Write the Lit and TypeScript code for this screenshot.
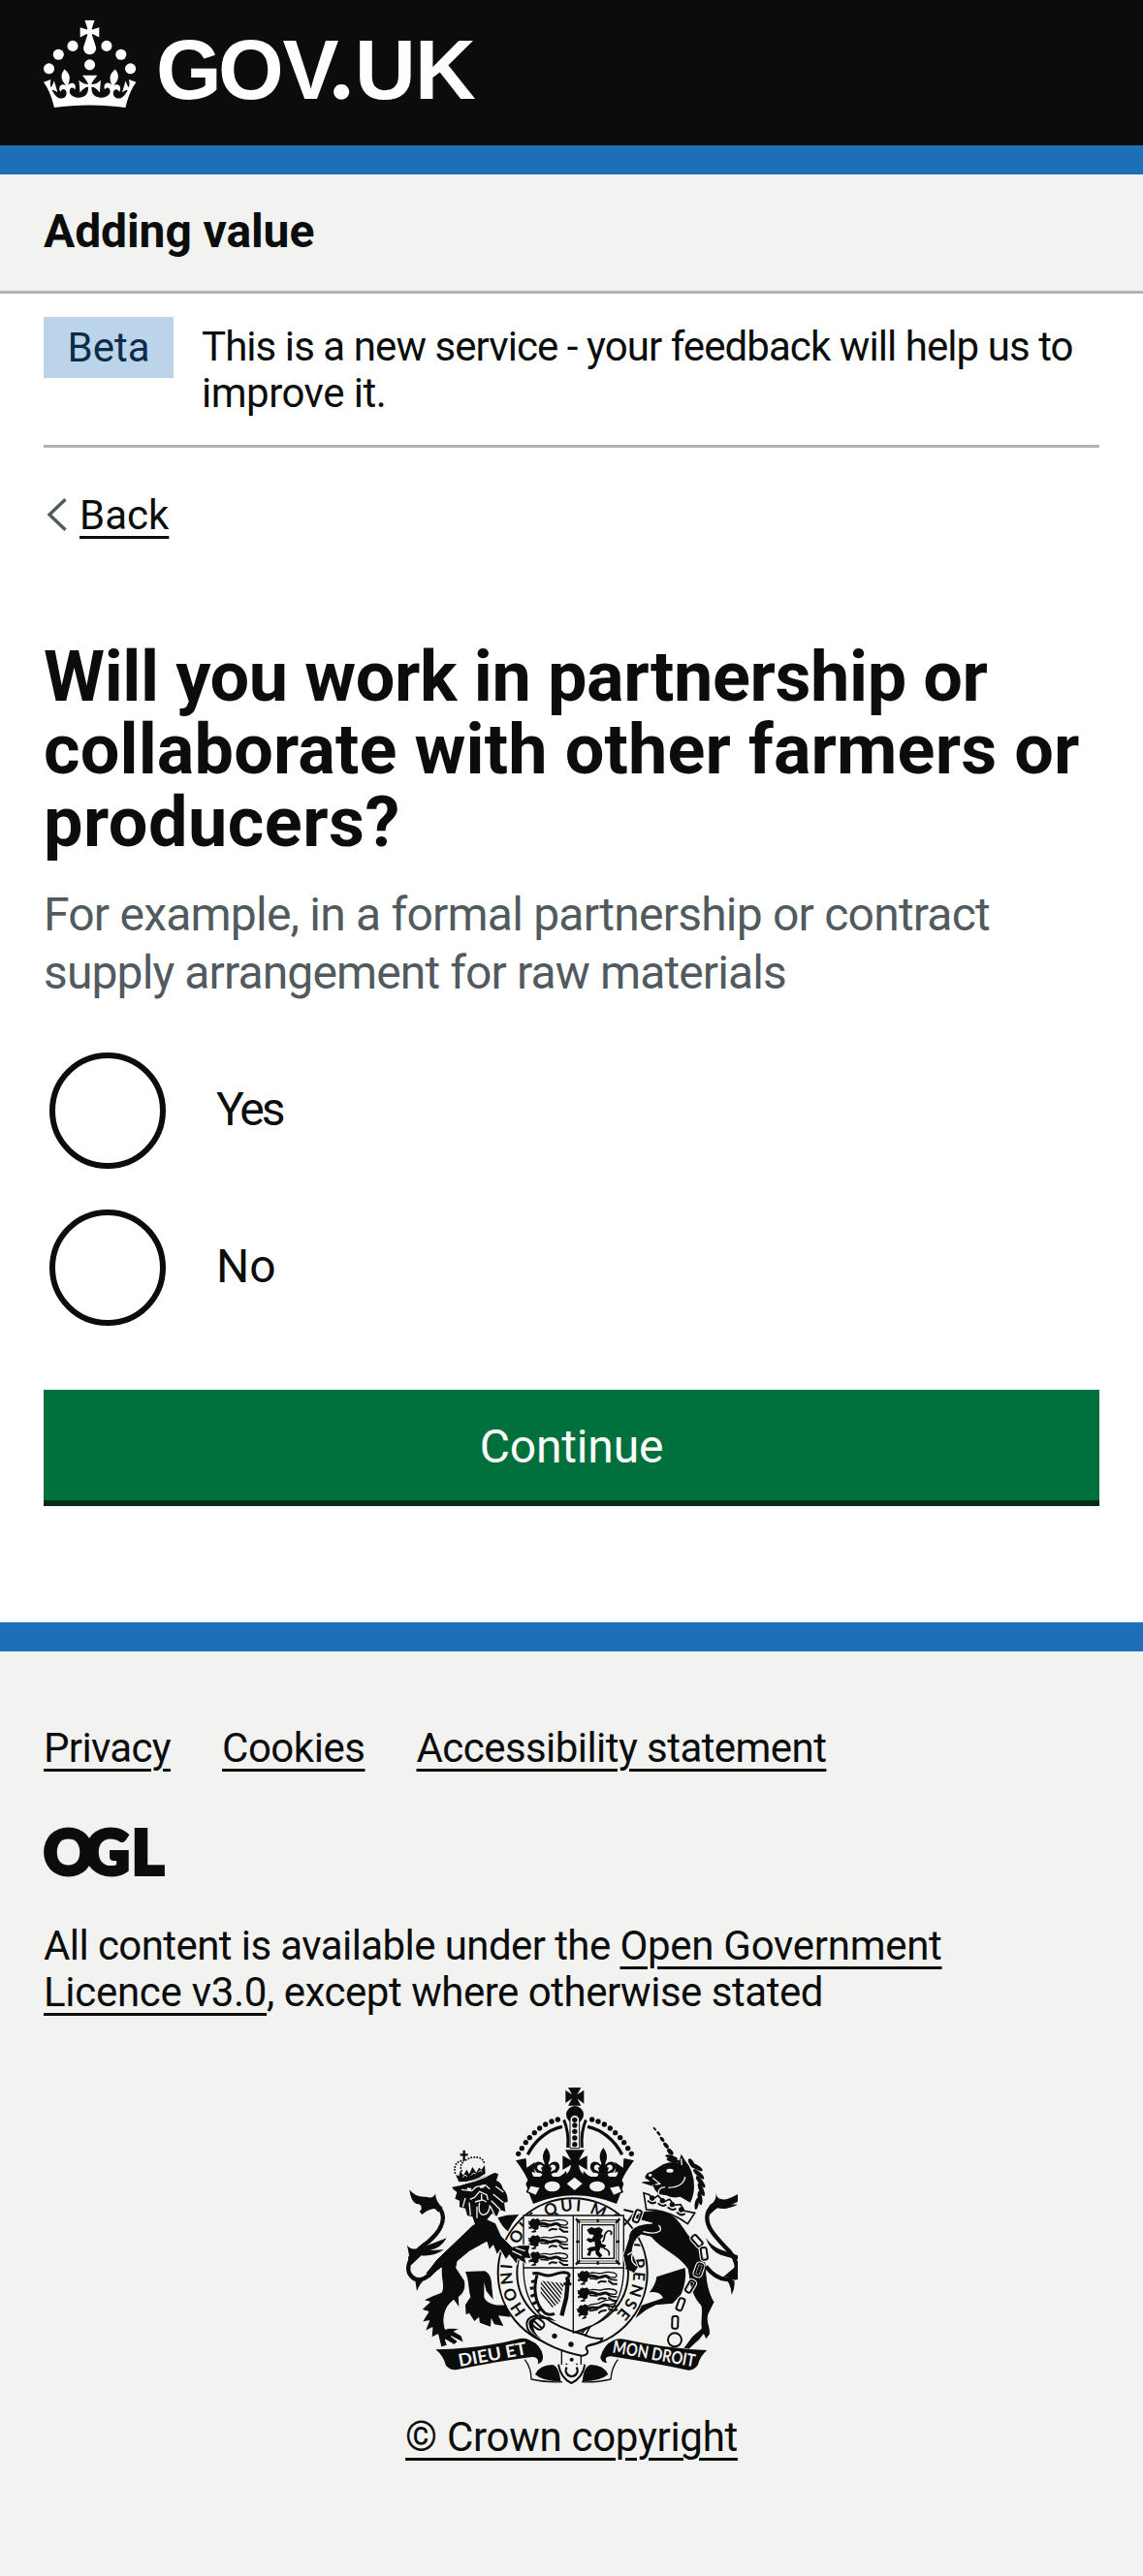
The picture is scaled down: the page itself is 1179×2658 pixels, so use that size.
import { LitElement, html, svg, css } from "lit";
import { customElement } from "lit/decorators.js";

const INK = "#0b0c0c";
const PAPER = "#f2f2f0";

/* One of the small walking lions in the quartered shield, 125 x 46 units. */
const passant = (x: number, y: number) => svg`
  <g transform="translate(${x} ${y})">
    <path d="M10 5l6-4 6 3 8-3 8 7 1 12-6 5-1 9-9 4-8-5-7-1-2-9-5-5z"/>
    <path d="M0 8l9 4-5 6zM2 26l10 4-9 5zM22 36l4 7-10 2-8-2z"/>
    <g fill="none" stroke="${INK}" stroke-linecap="round">
      <path d="M40 9c12-6 20 2 32 0s20-6 32-3c16 1 22 8 16 14s-14-2-24 2" stroke-width="4"/>
      <path d="M38 18c12-7 22 8 36 3s16-4 24 1" stroke-width="9"/>
      <path d="M40 25l22 2M94 22c8 8 16 8 28 8" stroke-width="5"/>
      <path d="M66 38c8-8 14-2 22-3M98 33l12 9h12" stroke-width="6"/>
    </g>
  </g>`;

const leaf = (x: number, y: number, rx: number, ry: number, a: number) =>
  svg`<ellipse cx="${x}" cy="${y}" rx="${rx}" ry="${ry}" transform="rotate(${a} ${x} ${y})"/>`;

const link = (x: number, y: number, a: number) => svg`
  <g transform="translate(${x} ${y}) rotate(${a})" fill="none">
    <rect x="-10" y="-20" width="20" height="40" rx="7" stroke="${PAPER}" stroke-width="11"/>
    <rect x="-9" y="-19" width="18" height="38" rx="6" stroke="${INK}" stroke-width="6"/>
  </g>`;

/* Half of the crown: pearls, arch, outer spike and fleur-de-lis. */
const halfCrown = svg`
  ${[[526, 141], [507, 147], [488, 156], [470, 168], [454, 182], [439, 197], [427, 212], [415, 230], [404, 247]].map(
    ([x, y]) => svg`<circle cx="${x}" cy="${y}" r="8"/>`)}
  <path d="M540 163C496 172 455 205 433 250" fill="none" stroke="${INK}" stroke-width="10"/>
  <path d="M545 142Q561 180 557 228" fill="none" stroke="${INK}" stroke-width="9"/>
  <path d="M396 268L427 261C430 268 428 280 430 290L456 272Q448 292 457 306L446 302Q446 320 462 320Q476 320 478 310Q470 304 462 306Q446 290 456 276Q470 266 484 280Q485 284 485 276Q472 252 491 228Q510 252 497 276Q497 284 500 280Q514 266 528 276Q538 290 522 306Q512 304 506 310Q508 320 520 320Q538 318 552 300L560 345H440Q428 310 396 268z"/>
  <path d="M468 298a9 9 0 1 1 12-10q-3 2-6 1l4 14zM514 298a9 9 0 1 0-12-10q3 2 6 1l-4 14z" fill="${PAPER}"/>`;

@customElement("royal-arms")
export class RoyalArms extends LitElement {
  static styles = css`
    :host { display: block; }
    .arms { display: block; width: 343px; height: 307px; }
    .motto { font-family: Lato, sans-serif; font-weight: 700; }
    .garter { font-family: Lato, sans-serif; font-weight: 700; }
  `;

  render() {
    return html`
      <svg class="arms" viewBox="54 42 1029 921" fill="${INK}" aria-hidden="true">
        <defs>
          <path id="ring" d="M429 734A188 188 0 1 1 683 764"/>
          <clipPath id="harp"><path d="M474 640l72 8-14 60-24 16-36-40z"/></clipPath>
        </defs>

        <!-- garter -->
        <circle cx="572" cy="616" r="231" fill="${PAPER}" stroke="${INK}" stroke-width="6"/>
        <circle cx="572" cy="616" r="172" fill="none" stroke="${INK}" stroke-width="6"/>
        <text class="garter" font-size="50"><textPath href="#ring" textLength="868">HONI SOIT QUI MAL Y PENSE</textPath></text>

        <!-- shield -->
        <path d="M420 438H730V600C730 700 690 765 575 806C460 765 420 700 420 600z" fill="${PAPER}" stroke="${INK}" stroke-width="4"/>
        <path d="M574 438V806M420 600H730" fill="none" stroke="${INK}" stroke-width="4"/>
        ${passant(434, 446)}${passant(434, 498)}${passant(434, 549)}
        ${passant(586, 608)}${passant(586, 660)}
        <g transform="rotate(-14 586 740)">${passant(586, 718)}</g>
        <g fill="none" stroke="${INK}">
          <rect x="586" y="452" width="128" height="134" stroke-width="3"/>
          <rect x="593" y="459" width="114" height="120" stroke-width="2"/>
          <rect x="601" y="467" width="99" height="104" stroke-width="4"/>
          <path d="M650 449v10M650 580v10M583 519h10M707 519h10M582 448l12 12M718 448l-12 12M582 590l12-12M718 590l-12-12" stroke-width="7"/>
        </g>
        <path d="M616 482l14-8 10 4 14-4 12 8-6 14 8 4-10 12 4 14 14 4-6 10-12-2-4 12 10 12-8 8-12-12-2-12-12 4-4 14-10-4 6-12-6-6 10-6 16-2-2-16-14 4-12-8 6-6 12 2 6-12-14-2z"/>
        <path d="M664 520c10-6 2-20 12-30s20-2 14 8M668 540c16 4 20 12 16 22" fill="none" stroke="${INK}" stroke-width="5"/>
        <g fill="none" stroke="${INK}">
          <path d="M448 618c20-8 30 8 52 6s34-16 56-8c10 6 4 18-6 16" stroke-width="9"/>
          <path d="M462 622c-12 40-8 90 24 118 10 6 20 6 30 2" stroke-width="9"/>
          <path d="M456 640l-12 4M452 662l-12 2M454 684l-12 4M460 706l-12 6M472 728l-10 8" stroke-width="9"/>
          <path d="M558 634l-6 60-14 54" stroke-width="13"/>
          <path d="M544 650h24" stroke-width="9"/>
          <g clip-path="url(#harp)" stroke-width="4">
            ${[0, 1, 2, 3, 4, 5, 6, 7, 8, 9, 10, 11].map((i) => svg`<path d="M${412 + i * 12} 630l90 110"/>`)}
          </g>
        </g>

        <!-- crown -->
        <path d="M558 42h40l-12 22 21-14v42l-21-16 12 22h-40l12-22-20 14V50l20 14z"/>
        <circle cx="579" cy="126" r="27"/>
        <path d="M564 230V142a14 14 0 0 1 29 0V230z" fill="${PAPER}" stroke="${INK}" stroke-width="3"/>
        ${[142, 159, 178, 198, 218].map((y) => svg`<circle cx="578.5" cy="${y}" r="8"/>`)}
        <path d="M450 402Q578 350 708 402Q718 378 730 340L718 318H440L427 340Q440 378 450 402z"/>
        ${halfCrown}
        <g transform="matrix(-1 0 0 1 1158 0)">${halfCrown}</g>
        <path d="M549 235h60l-18 32 26-14v44l-26-16c2 18 12 30 26 38h-76c14-8 24-20 26-38l-26 16v-44l26 14z"/>
        <path d="M578 320l24 20-24 20-24-20z" fill="${PAPER}"/>
        <ellipse cx="509" cy="348" rx="24" ry="16" fill="${PAPER}"/>
        <ellipse cx="648" cy="348" rx="24" ry="16" fill="${PAPER}"/>
        <path d="M441 344l32 7-14 26-28-12z" fill="${PAPER}" stroke="${INK}" stroke-width="5"/>
        <path d="M716 344l-32 7 14 26 28-12z" fill="${PAPER}" stroke="${INK}" stroke-width="5"/>

        <!-- lion -->
        <path d="M340 445l28-8 38-2q-20 22-34 52-16-10-32-42z"/>
        <path d="M262 468L150 575Q135 595 118 616L130 632Q150 610 166 600C163 635 176 655 166 676L140 686L110 700L130 706L105 730L126 736L106 768L128 764L115 796L138 785L135 816L155 806L165 846L184 840L178 822L205 838L217 828L196 812L235 832L228 810L205 797L222 790Q195 783 178 790C168 760 175 720 204 700L222 725L220 690C236 680 243 660 238 640L212 600L216 580L252 550L306 520L314 545L326 530L338 560L348 545L366 575L376 560L400 590L402 572L430 590L425 570L445 572L436 550L441 530L408 530L385 535L352 502L334 462L300 446z"
          stroke="${PAPER}" stroke-width="3"/>
        <path d="M240 612L300 610C318 618 322 640 322 660L326 698L305 672L298 645L298 690C305 712 335 718 366 715L380 752L342 748L358 780L330 775L320 755L318 782L285 770L282 752L268 765L252 740L242 745L240 715L256 690C248 660 252 640 240 612z"/>
        <path d="M385 548l30 14M395 538l30 10M232 572q-16 6-14 22l12 20" fill="none" stroke="${PAPER}" stroke-width="4"/>
        <path d="M140 606C115 645 82 645 66 616C54 582 88 545 125 520C160 490 180 455 166 425C152 400 124 412 102 430" fill="none" stroke="${INK}" stroke-width="13"/>
        <path d="M67 358Q84 382 118 380Q142 388 147 370Q148 396 170 414L156 428Q132 394 100 430Q112 402 88 402Q70 392 67 358zM60 530Q72 546 98 540L182 508Q164 540 130 546L174 544Q140 566 104 562L72 592Q58 572 66 562zM84 634L90 672Q98 650 116 634z"/>
        <path d="M202 356L199 350L226 345L330 305L342 310L336 330Q352 335 356 355Q372 370 371 396L360 398L364 426L346 420L338 440L322 432L308 450L290 476L270 465L262 442L246 438L240 416L222 412L222 392L208 386L214 366z"/>
        <g fill="none" stroke="${PAPER}" stroke-width="4">
          <path d="M200 345Q275 338 332 302"/>
          <path d="M228 358l32 4 12-12 30-6 14 12M254 388l14-6 16-18 22 10 4 16M270 396l22-6 14 6M290 372v18"/>
          <path d="M284 398q-6 38 12 38 18-2 20-30M252 398l4 40M240 384l-8 28M334 348l24 18M326 372l32 26M320 392l28 28M318 410l12 26M276 410v36"/>
        </g>
        <path d="M246 352l14 2-4 8-12-4zM284 346l16-4-2 10-12 2z" fill="${PAPER}"/>
        <path d="M236 236v32M224 250h24" stroke="${INK}" stroke-width="7" fill="none"/>
        <path d="M208 306C202 276 222 268 236 268M242 266C264 252 296 256 298 276M228 300C222 284 230 272 238 270" fill="none" stroke="${INK}" stroke-width="6" stroke-linecap="round" stroke-dasharray="0 9"/>
        <path d="M210 312l10 4 4-16 10 14 10-18 8 14 10-22 12 18 8-16 8 6 10-14 2 26Q268 334 220 334z"/>
        <path d="M232 320l8-8 6 6M258 314l8-8 6 4M280 304l6-6 6 4" fill="none" stroke="${PAPER}" stroke-width="3"/>

        <!-- unicorn -->
        ${leaf(826, 170, 7, 3, 50)}${leaf(838, 184, 8, 4, 50)}${leaf(849, 202, 9, 5, 50)}${leaf(861, 221, 11, 6, 50)}${leaf(874, 241, 12, 7, 48)}
        ${leaf(878, 258, 20, 6, 18)}${leaf(884, 268, 22, 6, 12)}
        <path d="M796 322Q798 304 816 302L852 280Q880 268 900 276L908 248L920 268Q948 300 948 350Q947 378 936 398L905 380Q880 386 862 376L838 372L826 358L822 348L784 336L812 332z"/>
        <path d="M838 372Q834 352 858 350M820 322l22 18-24 4" fill="none" stroke="${PAPER}" stroke-width="4"/>
        <path d="M786 334L828 346L826 332z"/>
        <ellipse cx="873" cy="299" rx="11" ry="6" fill="${PAPER}"/>
        <circle cx="812" cy="313" r="5" fill="${PAPER}"/>
        <path d="M920 318Q916 350 868 352M908 262l2 20" fill="none" stroke="${PAPER}" stroke-width="4"/>
        ${leaf(940, 276, 16, 7, 60)}${leaf(955, 288, 22, 7, 30)}${leaf(962, 310, 22, 7, 42)}${leaf(968, 334, 22, 7, 52)}${leaf(970, 358, 22, 7, 66)}${leaf(966, 384, 22, 7, 82)}${leaf(956, 402, 18, 6, 100)}
        <path d="M745 510C746 476 775 464 818 462L766 448Q764 430 800 424Q860 414 892 446C915 470 925 495 945 515C965 545 986 570 986 605C986 650 1000 690 1011 706L992 745C986 770 999 780 997 805L985 822L977 806L965 822L932 852L914 850L942 812L970 788C966 760 975 735 968 716C950 698 938 670 934 644L928 604C900 560 850 548 815 505L784 498Q760 512 756 550L775 598L762 618L736 598L728 562z"
          stroke="${PAPER}" stroke-width="3"/>
        <path d="M832 628L920 600Q926 640 908 682L882 710L830 715L800 730L766 756L786 716L852 694Q842 670 810 676Q830 650 832 628z"/>
        <path d="M730 420l34 8-22 30M736 600l18 8M780 484q40-4 62-2l-2 14" fill="none" stroke="${INK}" stroke-width="6"/>
        <path d="M790 488q36 10 52-2 6-8-4-18" fill="none" stroke="${PAPER}" stroke-width="4"/>
        <path d="M762 548q-18 30 8 46M742 560l14-8" fill="none" stroke="${PAPER}" stroke-width="4"/>
        <path d="M792 368l18 6 8 16 18-14 18 20 18-8 14 18 20-2 12 20 32 6-22 34Q866 418 800 420z" fill="${PAPER}" stroke="${INK}" stroke-width="5"/>
        ${[[818, 384], [850, 392], [880, 404], [908, 420]].map(([x, y]) => svg`<circle cx="${x}" cy="${y}" r="8"/><path d="M${x - 14} ${y + 8}q14 14 26 4" fill="none" stroke="${INK}" stroke-width="6"/>`)}
        ${link(772, 440, 20)}
        ${link(957, 516, -42)}${link(979, 556, -8)}${link(963, 606, 20)}${link(936, 658, 30)}${link(906, 713, 20)}${link(889, 769, 2)}
        <circle cx="888" cy="823" r="21" fill="none" stroke="${INK}" stroke-width="6"/>
        <path d="M984 596Q1030 652 1072 628Q1092 590 1058 550C1020 510 974 470 992 425C1004 402 1040 412 1083 388" fill="none" stroke="${INK}" stroke-width="13"/>
        <path d="M1016 370Q1018 392 1048 388Q1070 380 1083 372V392Q1056 396 1050 402L1083 404Q1040 424 1020 414L990 440Q985 412 1004 400Q1016 392 1016 370zM984 506Q996 528 1030 544L1083 562V574Q1050 566 1030 560Q996 546 984 506zM1083 590V636Q1066 642 1036 630zM1036 630Q1062 640 1064 684Q1080 650 1068 626z"/>

        <!-- belt, plinth and motto ribbons -->
        <path d="M424 884Q444 910 444 945Q490 956 540 953M712 884Q692 910 690 945Q640 956 600 953" fill="none" stroke="${INK}" stroke-width="4"/>
        <path d="M456 930Q470 900 510 900Q530 905 535 952Q480 952 456 930zM682 930Q668 900 628 900Q606 905 602 952Q656 952 682 930z"/>
        <path d="M538 850V900M598 850V900" fill="none" stroke="${INK}" stroke-width="4"/>
        <path d="M528 900Q548 915 554 896M610 900Q590 915 584 896" fill="none" stroke="${INK}" stroke-width="5"/>
        <path d="M528 900Q536 942 568 957Q602 942 610 900" fill="${PAPER}" stroke="${INK}" stroke-width="6"/>
        <path d="M554 908a18 18 0 1 0 30 0" fill="none" stroke="${INK}" stroke-width="7"/>
        <circle cx="569" cy="884" r="6"/>
        <path d="M430 770Q436 744 480 750C520 780 562 796 604 806Q640 822 664 818Q662 832 636 836Q604 842 618 856Q622 870 600 872C540 860 480 834 440 800Q430 790 430 770z" fill="${PAPER}" stroke="${INK}" stroke-width="6"/>
        <path d="M436 770Q440 748 500 752l22 14Q470 750 450 768Q446 800 476 820Q436 800 436 770z"/>
        <rect x="448" y="760" width="36" height="28" rx="12" transform="rotate(38 466 774)" fill="${PAPER}" stroke="${INK}" stroke-width="6"/>
        <path d="M452 764l26 24" stroke="${INK}" stroke-width="6"/>
        <circle cx="516" cy="811" r="8"/><circle cx="567" cy="837" r="8"/>
        <path d="M572 802L626 782L610 812M598 806l18-22" fill="none" stroke="${INK}" stroke-width="5"/>
        <path d="M148 853Q290 850 400 821Q425 815 440 824Q474 838 480 872Q482 892 464 898Q470 876 446 876Q320 892 215 915Q195 919 180 903Q172 872 148 853z"/>
        <path d="M988 855Q860 850 736 822Q712 816 698 824Q668 838 658 876Q658 892 678 895Q666 874 690 874Q820 894 930 917Q948 918 960 900Q966 874 988 855z"/>
        <g class="motto" fill="${PAPER}" font-size="54">
          <text transform="translate(222 906) rotate(-10.5)" textLength="214" lengthAdjust="spacingAndGlyphs">DIEU ET</text>
          <text transform="translate(694 862) rotate(10)" textLength="258" lengthAdjust="spacingAndGlyphs">MON DROIT</text>
        </g>
      </svg>`;
  }
}

@customElement("app-root")
export class AppRoot extends LitElement {
  static styles = css`
    :host {
      display: flex; flex-direction: column; min-height: 2658px;
      background: #fff; color: #0b0c0c;
      font: 400 42px/48px Roboto, "Liberation Sans", sans-serif;
    }
    a { color: inherit; text-decoration: underline; text-decoration-thickness: 3px; text-underline-offset: 7px; }
    .masthead { box-sizing: border-box; height: 180px; padding: 21px 45px 0; background: #0b0c0c; border-bottom: 30px solid #1d70b8; }
    .logo { display: block; width: 486px; height: 90px; fill: #fff; overflow: visible; }
    .wordmark { font: 700 87px "Liberation Sans", sans-serif; }
    .stop { font: 900 98px Lato, sans-serif; }
    .service { box-sizing: border-box; height: 123px; padding: 29px 45px 0; background: #f2f2f0; border-bottom: 3px solid #b1b4b6; font-size: 48px; line-height: 60px; font-weight: 700; letter-spacing: -0.1px; }
    main { padding: 0 45px; }
    .phase { box-sizing: border-box; height: 159px; padding-top: 24px; border-bottom: 3px solid #b1b4b6; display: flex; align-items: flex-start; gap: 29px; }
    .tag { width: 134px; height: 63px; line-height: 63px; text-align: center; background: #bbd4ea; color: #0c2d4a; }
    .phase-text { margin: 7px 0 0; white-space: nowrap; }
    .back { display: flex; align-items: center; margin-top: 46px; }
    .chevron { width: 21px; height: 34px; margin: 0 13px 2px 3px; fill: none; stroke: #505a5f; stroke-width: 3.4; }
    h1 { margin: 105px 0 0; font-size: 72px; line-height: 75px; font-weight: 700; white-space: nowrap; }
    .hint { margin: 28px 0 0; font-size: 48px; line-height: 60px; color: #505a5f; white-space: nowrap; }
    .radios { display: grid; gap: 42px; margin-top: 52px; padding-left: 6px; }
    .radio { display: flex; align-items: center; gap: 52px; font-size: 48px; line-height: 60px; }
    .dot { box-sizing: border-box; width: 120px; height: 120px; border: 6px solid #0b0c0c; border-radius: 50%; }
    .label { padding-bottom: 2px; }
    .go { display: block; box-sizing: border-box; width: 100%; height: 120px; margin-top: 66px; padding: 3px 0 0; border: 0; border-bottom: 6px solid #002d18; background: #00703c; color: #fff; font: 400 48px/60px Roboto, sans-serif; letter-spacing: -0.2px; }
    footer { flex: 1; margin-top: 120px; padding: 76px 45px 0; background: #f2f2f0; border-top: 30px solid #1d70b8; }
    .links { display: flex; gap: 53px; }
    .ogl { display: block; width: 124px; height: 50px; margin-top: 59px; overflow: visible; fill: #0b0c0c; }
    .ogl-text { font: 900 63px Lato, sans-serif; stroke: #0b0c0c; stroke-width: 4px; }
    .licence { margin: 47px 0 0; white-space: nowrap; }
    .crown { display: flex; flex-direction: column; align-items: center; gap: 30px; margin-top: 74px; }
    .t0 { letter-spacing: -0.93px; } .t1 { letter-spacing: -0.5px; }
    .h0 { letter-spacing: -0.37px; } .h1 { letter-spacing: 0.14px; } .h2 { letter-spacing: 0.5px; }
    .n0 { letter-spacing: -0.78px; } .n1 { letter-spacing: -0.87px; }
    .yes { letter-spacing: -3px; }
    .k0 { letter-spacing: -0.67px; } .k1 { letter-spacing: -0.46px; } .k2 { letter-spacing: -0.56px; }
    .l0 { letter-spacing: -0.58px; } .l1 { letter-spacing: -0.29px; } .l2 { letter-spacing: -0.48px; }
  `;

  render() {
    return html`
      <header class="masthead">
        <svg class="logo" viewBox="0 0 486 90" role="img">
          <g transform="scale(1.5)">
            ${[[20, 17.6], [10.2, 23.5], [3.7, 33.2], [31.7, 30.6], [43.3, 17.6], [53.2, 23.5], [59.7, 33.2]].map(
              ([x, y]) => svg`<circle cx="${x}" cy="${y}" r="3.7"/>`)}
            <path d="M33.1,9.8c.2-.1.3-.3.5-.5l4.6,2.4v-6.8l-4.6,1.5c-.1-.2-.3-.3-.5-.5l1.9-5.9h-6.7l1.9,5.9c-.2.1-.3.3-.5.5l-4.6-1.5v6.8l4.6-2.4c.1.2.3.3.5.5l-2.6,8c-.9,2.8,1.2,5.7,4.1,5.7h0c3,0,5.1-2.9,4.1-5.7l-2.6-8ZM37,37.9s-3.4,3.8-4.1,6.1c2.2,0,4.2-.5,6.4-2.8l-.7,8.5c-2-2.8-4.4-4.1-5.7-3.8.1,3.1.5,6.7,5.8,7.2,3.7.3,6.7-1.5,7-3.8.4-2.6-2-4.3-3.7-1.6-1.4-4.5,2.4-6.1,4.9-3.2-1.9-4.5-1.8-7.7,2.4-10.9,3,4,2.6,7.3-1.2,11.1,2.4-1.3,6.2,0,4,4.6-1.2-2.8-3.7-2.2-4.2.2-.3,1.7.7,3.7,3,4.2,1.9.3,4.7-.9,7-5.9-1.3,0-2.4.7-3.9,1.7l2.4-8c.6,2.3,1.4,3.7,2.2,4.5.6-1.6.5-2.8,0-5.3l5,1.8c-2.6,3.6-5.2,8.7-7.3,17.5-7.4-1.1-15.7-1.7-24.5-1.7h0c-8.8,0-17.1.6-24.5,1.7-2.1-8.9-4.7-13.9-7.3-17.5l5-1.8c-.5,2.5-.6,3.7,0,5.3.8-.8,1.6-2.3,2.2-4.5l2.4,8c-1.5-1-2.6-1.7-3.9-1.7,2.3,5,5.2,6.2,7,5.9,2.3-.4,3.3-2.4,3-4.2-.5-2.4-3-3.1-4.2-.2-2.2-4.6,1.6-6,4-4.6-3.7-3.7-4.2-7.1-1.2-11.1,4.2,3.2,4.3,6.4,2.4,10.9,2.5-2.8,6.3-1.3,4.9,3.2-1.8-2.7-4.1-1-3.7,1.6.3,2.3,3.3,4.1,7,3.8,5.4-.5,5.7-4.2,5.8-7.2-1.3-.2-3.7,1-5.7,3.8l-.7-8.5c2.2,2.3,4.2,2.7,6.4,2.8-.7-2.3-4.1-6.1-4.1-6.1h10.6Z"/>
          </g>
          <text class="wordmark" x="116 180 246.5 295.5 321 383" y="80.7">GOV<tspan class="stop">.</tspan>UK</text>
        </svg>
      </header>
      <div class="service">Adding value</div>
      <main>
        <div class="phase">
          <div class="tag">Beta</div>
          <p class="phase-text"><span class="t0">This is a new service - your feedback will help us to</span><br><span class="t1">improve it.</span></p>
        </div>
        <div class="back">
          <svg class="chevron" viewBox="0 0 21 34"><path d="M19.5 1.2L3 17L19.5 32.8"/></svg>
          <a>Back</a>
        </div>
        <h1><span class="h0">Will you work in partnership or</span><br><span class="h1">collaborate with other farmers or</span><br><span class="h2">producers?</span></h1>
        <p class="hint"><span class="n0">For example, in a formal partnership or contract</span><br><span class="n1">supply arrangement for raw materials</span></p>
        <div class="radios">
          <label class="radio"><span class="dot"></span><span class="label yes">Yes</span></label>
          <label class="radio"><span class="dot"></span><span class="label">No</span></label>
        </div>
        <button class="go">Continue</button>
      </main>
      <footer>
        <div class="links"><a class="k0">Privacy</a><a class="k1">Cookies</a><a class="k2">Accessibility statement</a></div>
        <svg class="ogl" viewBox="0 0 124 50"><text class="ogl-text" x="0 43 91" y="47.3">OGL</text></svg>
        <p class="licence"><span class="l0">All content is available under the </span><a class="l1">Open Government<br>Licence v3.0</a><span class="l2">, except where otherwise stated</span></p>
        <div class="crown"><royal-arms></royal-arms><a class="l1">© Crown copyright</a></div>
      </footer>`;
  }
}
